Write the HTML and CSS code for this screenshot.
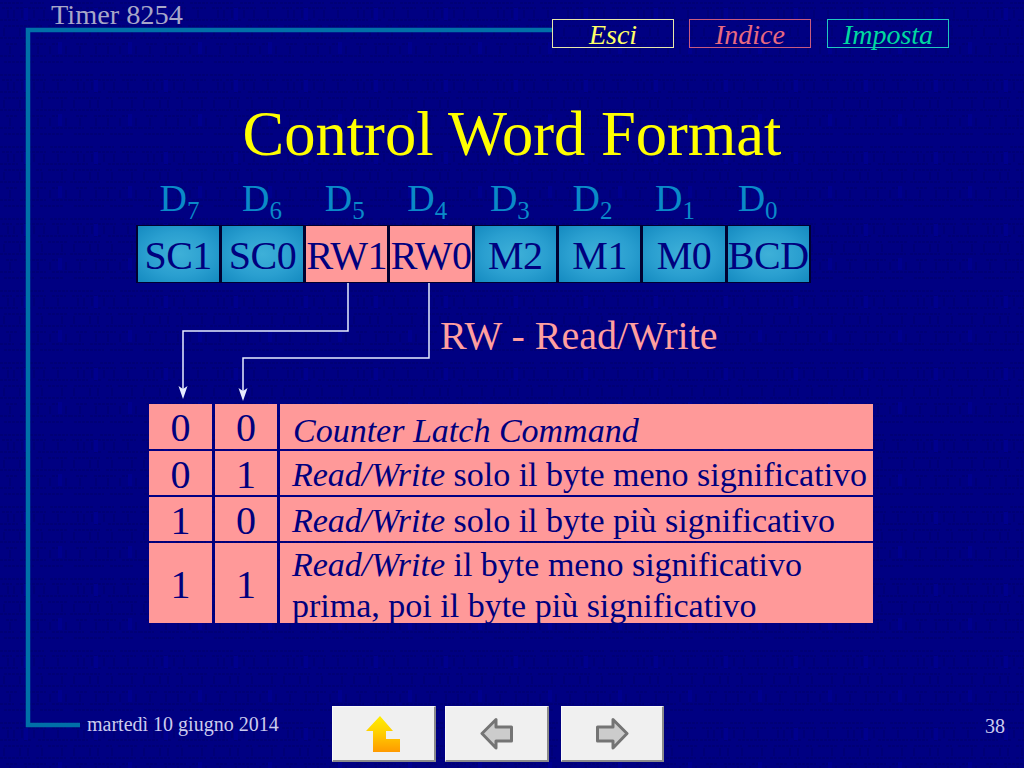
FILE: index.html
```html
<!DOCTYPE html>
<html lang="it">
<head>
<meta charset="utf-8">
<title>Control Word Format</title>
<link rel="stylesheet" href="styles.css">
</head>
<body>
<main class="slide">
  <svg class="overlay" width="1024" height="768" viewBox="0 0 1024 768" aria-hidden="true">
    <path class="frame" d="M552 30H28V725H80"/>
    <path class="wire" d="M348 283V331H183V391"/>
    <path class="wire" d="M429 283V358H243V391"/>
    <path class="head" d="M183 399L178.500 386L183 389L187.500 386Z"/>
    <path class="head" d="M243 401L238.500 388L243 391L247.500 388Z"/>
  </svg>

  <header class="top">
    <div class="section">Timer 8254</div>
    <nav class="nav">
      <a class="nav-btn esci">Esci</a>
      <a class="nav-btn indice">Indice</a>
      <a class="nav-btn imposta">Imposta</a>
    </nav>
  </header>

  <h1 class="title">Control Word Format</h1>

  <div class="bits">
    <span>D<sub>7</sub></span><span>D<sub>6</sub></span><span>D<sub>5</sub></span><span>D<sub>4</sub></span>
    <span>D<sub>3</sub></span><span>D<sub>2</sub></span><span>D<sub>1</sub></span><span>D<sub>0</sub></span>
  </div>

  <div class="register">
    <div class="cell blue">SC1</div>
    <div class="cell blue">SC0</div>
    <div class="cell pink">RW1</div>
    <div class="cell pink">RW0</div>
    <div class="cell blue">M2</div>
    <div class="cell blue">M1</div>
    <div class="cell blue">M0</div>
    <div class="cell blue">BCD</div>
  </div>

  <p class="subtitle">RW - Read/Write</p>

  <div class="table">
    <div class="num">0</div><div class="num">0</div>
    <div class="desc first"><em>Counter Latch Command</em></div>
    <div class="num">0</div><div class="num">1</div>
    <div class="desc"><span><em>Read/Write</em> solo il byte meno significativo</span></div>
    <div class="num">1</div><div class="num">0</div>
    <div class="desc"><span><em>Read/Write</em> solo il byte più significativo</span></div>
    <div class="num">1</div><div class="num">1</div>
    <div class="desc"><span><em>Read/Write</em> il byte meno significativo<br>prima, poi il byte più significativo</span></div>
  </div>

  <footer class="bottom">
    <div class="date">martedì 10 giugno 2014</div>
    <div class="buttons">
      <a class="btn">
        <svg class="icon-up" width="34" height="36" viewBox="0 0 34 36" aria-hidden="true">
          <defs>
            <linearGradient id="gold" x1="0" y1="0" x2="0" y2="1"><stop offset="0" stop-color="#ffee00"/><stop offset="0.45" stop-color="#ffd000"/><stop offset="1" stop-color="#ff9a00"/></linearGradient>
          </defs>
          <path d="M0 15L14 0L27 15H20V23H34V36H7V15Z" fill="url(#gold)"/>
        </svg>
      </a>
      <a class="btn">
        <svg width="34" height="34" viewBox="0 0 34 34" aria-hidden="true">
          <path d="M2 16.500L16 2.500V10H31.500V24H16V31Z" fill="#cccccc" stroke="#747474" stroke-width="3" stroke-linejoin="round"/>
        </svg>
      </a>
      <a class="btn last">
        <svg width="34" height="34" viewBox="0 0 34 34" aria-hidden="true">
          <path d="M32 16.500L18 2.500V10H2.500V24H18V31Z" fill="#cccccc" stroke="#747474" stroke-width="3" stroke-linejoin="round"/>
        </svg>
      </a>
    </div>
    <div class="page">38</div>
  </footer>
</main>
</body>
</html>
```
FILE: styles.css
```css
* { box-sizing: border-box; }
html, body { margin: 0; padding: 0; }
body {
  width: 1024px;
  height: 768px;
  overflow: hidden;
  font-family: "Liberation Serif", "Times New Roman", serif;
  background-color: #000082;
}
.slide {
  position: relative;
  width: 1024px;
  height: 768px;
  overflow: hidden;
  background-color: #000082;
  background-image: url("data:image/svg+xml,%3Csvg xmlns='http://www.w3.org/2000/svg' width='70' height='72'%3E%3Cpath d='M0 3h24M30 3h14M50 3h18M2 8h10M16 8h30M52 8h14M0 20h18M24 20h8M38 20h30M4 26h26M36 26h6M48 26h20M0 38h30M36 38h30M6 44h12M24 44h22M52 44h10M0 56h14M20 56h26M52 56h18M4 62h30M40 62h24' stroke='%23000072' stroke-width='1.500' stroke-dasharray='3 1' fill='none'/%3E%3Cpath d='M8 10v8M14 10v8M22 10v8M34 10v8M44 10v8M58 10v8M4 28v8M20 28v8M28 28v8M42 28v8M62 28v8M10 46v8M26 46v8M38 46v8M50 46v8M66 46v8' stroke='%23000074' stroke-width='1.500' fill='none'/%3E%3Cpath d='M26 8v12M60 42v12' stroke='%2300008e' stroke-width='4' fill='none'/%3E%3C/svg%3E");
}
.overlay { position: absolute; left: 0; top: 0; pointer-events: none; }
.frame { fill: none; stroke: #0070a8; stroke-width: 4.500; }
.wire { fill: none; stroke: #e6ecff; stroke-width: 1.500; }
.head { fill: #e6ecff; }

.top { display: flex; height: 49px; padding-left: 51px; padding-right: 75px; }
.section { font-size: 28.300px; line-height: 30px; color: #a7a7c8; }
.nav { display: flex; gap: 15px; margin-left: auto; margin-top: 19px; height: 29px; }
.nav-btn {
  display: flex; align-items: center; justify-content: center;
  width: 122px; height: 29px;
  padding-top: 2px;
  border: 1px solid; font-style: italic; font-size: 28px;
}
.esci { color: #ffff66; border-color: #e8e8a8; }
.indice { color: #e86a80; border-color: #c85a80; }
.imposta { color: #00d8a0; border-color: #20c8c0; margin-left: 1px; }

.title {
  margin: 47px 0 0;
  height: 77px;
  font-size: 62.500px;
  line-height: 76px;
  font-weight: normal;
  text-align: center;
  color: #ffff00;
}
.bits {
  display: grid;
  grid-template-columns: repeat(8, 82.600px);
  margin: 0 0 0 159.500px;
  height: 52px;
  font-size: 38px;
  line-height: 50px;
  color: #0a8ac8;
}
.bits sub { font-size: 25px; line-height: 0; vertical-align: -8px; }
.register {
  display: grid;
  grid-template-columns: repeat(8, 84.300px);
  width: 675px;
  height: 58px;
  margin-left: 136px;
  background: #000030;
  padding: 1px 0;
}
.cell {
  display: flex; align-items: center; justify-content: center;
  margin: 0 1.500px;
  padding-top: 2px;
  font-size: 40px;
  letter-spacing: -0.500px;
  color: #00007e;
  white-space: nowrap;
}
.blue { background: radial-gradient(ellipse at center, #3eb0d8 0%, #2a9fd0 55%, #148ac0 100%); }
.pink { background: #ff9999; }

.subtitle {
  margin: 35px 0 0 440px;
  height: 49px;
  font-size: 40px;
  line-height: 35px;
  color: #ff9f9f;
}
.table {
  display: grid;
  grid-template-columns: 63px 62px 593px;
  grid-template-rows: 45px 44px 44px 80px;
  column-gap: 3px;
  row-gap: 2px;
  width: 724px;
  margin: 37px 0 0 149px;
  color: #00007e;
}
.num {
  display: flex; align-items: center; justify-content: center;
  padding-top: 2px;
  background: #ff9999;
  font-size: 40px;
}
.desc {
  display: flex; align-items: center;
  background: #ff9999;
  padding-left: 12px;
  padding-top: 3px;
  font-size: 34px;
  line-height: 41px;
  white-space: nowrap;
}
.first { padding-left: 13px; padding-top: 8px; }

.bottom {
  position: absolute;
  left: 0; right: 0; bottom: 6px;
  display: flex;
  align-items: flex-start;
  height: 56px;
}
.date { margin: 5px 0 0 87px; width: 245px; font-size: 20px; line-height: 26px; color: #ccccee; }
.buttons { display: flex; gap: 9px; }
.btn {
  display: flex; align-items: center; justify-content: center;
  width: 104px; height: 56px;
  background: #f0f0f0;
  border-right: 2px solid #8a8a8a;
  border-bottom: 2px solid #8a8a8a;
  border-top: 1px solid #fafafa;
  border-left: 1px solid #fafafa;
}
.icon-up { margin-right: 2px; }
.last { margin-left: 3px; width: 103px; }
.page { margin: 7px 0 0 321px; font-size: 20px; line-height: 26px; color: #ccccee; }
```
